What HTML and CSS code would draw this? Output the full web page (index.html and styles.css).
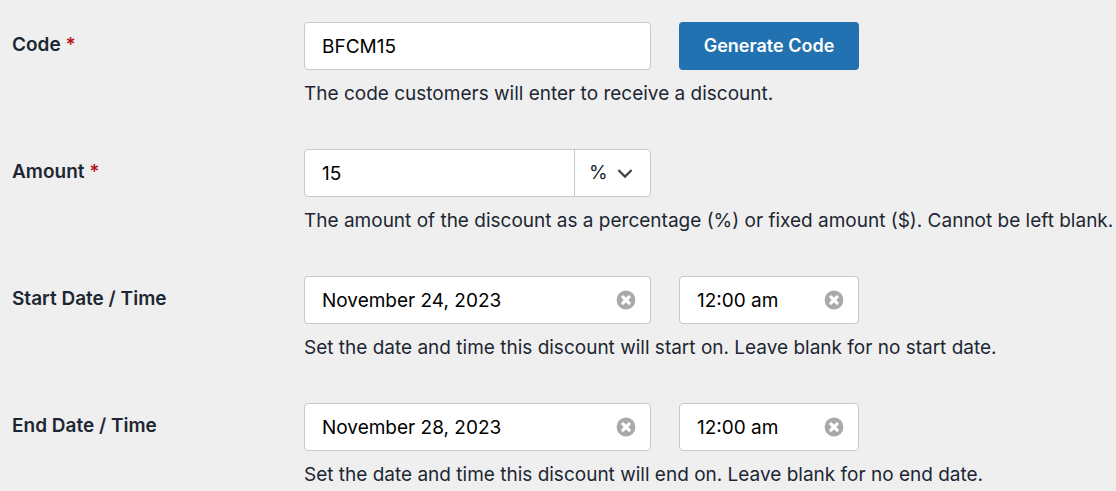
FILE: index.html
```html
<!DOCTYPE html>
<html lang="en">
<head>
    <meta charset="UTF-8">
    <meta name="viewport" content="width=device-width, initial-scale=1.0">
    <title>Discount Code</title>
    <link rel="stylesheet" href="styles.css">
</head>
<body>
    <svg class="sprite" aria-hidden="true">
        <symbol id="icon-clear" viewBox="0 0 20 20">
            <circle cx="10" cy="10" r="9.4" fill="#a7aaad"/>
            <path d="M6.9 6.9l6.2 6.2M13.1 6.9l-6.2 6.2" stroke="#fff" stroke-width="3.2" stroke-linecap="round"/>
        </symbol>
    </svg>

    <form class="discount-form">
        <div class="form-row">
            <label class="form-label" for="code">Code <span class="required">*</span></label>
            <div class="form-field">
                <div class="controls">
                    <div class="control wide"><input type="text" id="code" value="BFCM15"></div>
                    <button type="button" class="generate">Generate Code</button>
                </div>
                <p class="help">The code customers will enter to receive a discount.</p>
            </div>
        </div>

        <div class="form-row">
            <label class="form-label" for="amount">Amount <span class="required">*</span></label>
            <div class="form-field">
                <div class="controls">
                    <div class="control wide">
                        <input type="text" id="amount" value="15">
                        <div class="type">
                            <select id="type" aria-label="Amount type">
                                <option selected>%</option>
                                <option>$</option>
                            </select>
                            <svg class="chevron" viewBox="0 0 16 16" aria-hidden="true">
                                <path d="M1.4 5L8 11.6L14.6 5" fill="none" stroke="#3c434a" stroke-width="2.2"/>
                            </svg>
                        </div>
                    </div>
                </div>
                <p class="help">The amount of the discount as a percentage (%) or fixed amount ($). Cannot be left blank.</p>
            </div>
        </div>

        <div class="form-row">
            <label class="form-label" for="startDate">Start Date / Time</label>
            <div class="form-field">
                <div class="controls">
                    <div class="control wide">
                        <input type="text" id="startDate" value="November 24, 2023">
                        <button type="button" class="clear" aria-label="Clear start date"><svg><use href="#icon-clear"/></svg></button>
                    </div>
                    <div class="control narrow">
                        <input type="text" id="startTime" value="12:00 am" aria-label="Start time">
                        <button type="button" class="clear" aria-label="Clear start time"><svg><use href="#icon-clear"/></svg></button>
                    </div>
                </div>
                <p class="help">Set the date and time this discount will start on. Leave blank for no start date.</p>
            </div>
        </div>

        <div class="form-row">
            <label class="form-label" for="endDate">End Date / Time</label>
            <div class="form-field">
                <div class="controls">
                    <div class="control wide">
                        <input type="text" id="endDate" value="November 28, 2023">
                        <button type="button" class="clear" aria-label="Clear end date"><svg><use href="#icon-clear"/></svg></button>
                    </div>
                    <div class="control narrow">
                        <input type="text" id="endTime" value="12:00 am" aria-label="End time">
                        <button type="button" class="clear" aria-label="Clear end time"><svg><use href="#icon-clear"/></svg></button>
                    </div>
                </div>
                <p class="help">Set the date and time this discount will end on. Leave blank for no end date.</p>
            </div>
        </div>
    </form>

    <script>
        // Clear buttons empty the input beside them
        document.querySelectorAll('.clear').forEach((btn) => {
            btn.addEventListener('click', () => {
                btn.previousElementSibling.value = '';
            });
        });
    </script>
</body>
</html>
```
FILE: styles.css
```css
* {
    box-sizing: border-box;
}
body {
    margin: 0;
    background-color: #efefef;
    color: #1d2733;
    font-family: Inter, 'Liberation Sans', sans-serif;
    font-size: 19px;
    line-height: 24px;
}
.sprite {
    display: none;
}
.discount-form {
    display: flex;
    flex-direction: column;
    gap: 43px;
    padding: 22px 0 4px 12px;
}
.form-row {
    display: flex;
}
.form-label {
    flex: 0 0 292px;
    padding-top: 11px;
    font-weight: 600;
}
.required {
    color: #b3131b;
}
.form-field {
    flex: 1;
    min-width: 0;
}
.controls {
    display: flex;
    gap: 28px;
}
.control {
    display: flex;
    align-items: center;
    min-width: 0;
    height: 48px;
    border: 1px solid #c8c8c8;
    border-radius: 4px;
    background-color: #fff;
}
.wide {
    flex: 0 1 347px;
}
.narrow {
    flex: 0 1 180px;
}
input, select, button {
    font: inherit;
    border: none;
    background: none;
}
input {
    flex: 1;
    min-width: 0;
    height: 100%;
    padding: 0 0 0 17px;
    color: #000;
    outline: none;
}
.control:focus-within {
    border-color: #2271b1;
}
.generate {
    flex: 0 1 180px;
    height: 48px;
    padding: 0;
    border-radius: 4px;
    background-color: #2271b1;
    color: #fff;
    font-size: 18px;
    font-weight: 600;
    cursor: pointer;
}
.generate:hover {
    background-color: #135e96;
}
.type {
    display: flex;
    align-items: center;
    position: relative;
    width: 76px;
    height: 100%;
    border-left: 1px solid #c8c8c8;
}
.type select {
    appearance: none;
    width: 100%;
    height: 100%;
    padding: 0 0 0 14px;
    color: #1d2733;
    outline: none;
}
.chevron {
    position: absolute;
    right: 17px;
    width: 16px;
    height: 16px;
    pointer-events: none;
}
.clear {
    display: flex;
    margin-right: 14px;
    padding: 0;
    cursor: pointer;
}
.clear svg {
    width: 20px;
    height: 20px;
}
.help {
    margin: 12px 0 0;
}
```
